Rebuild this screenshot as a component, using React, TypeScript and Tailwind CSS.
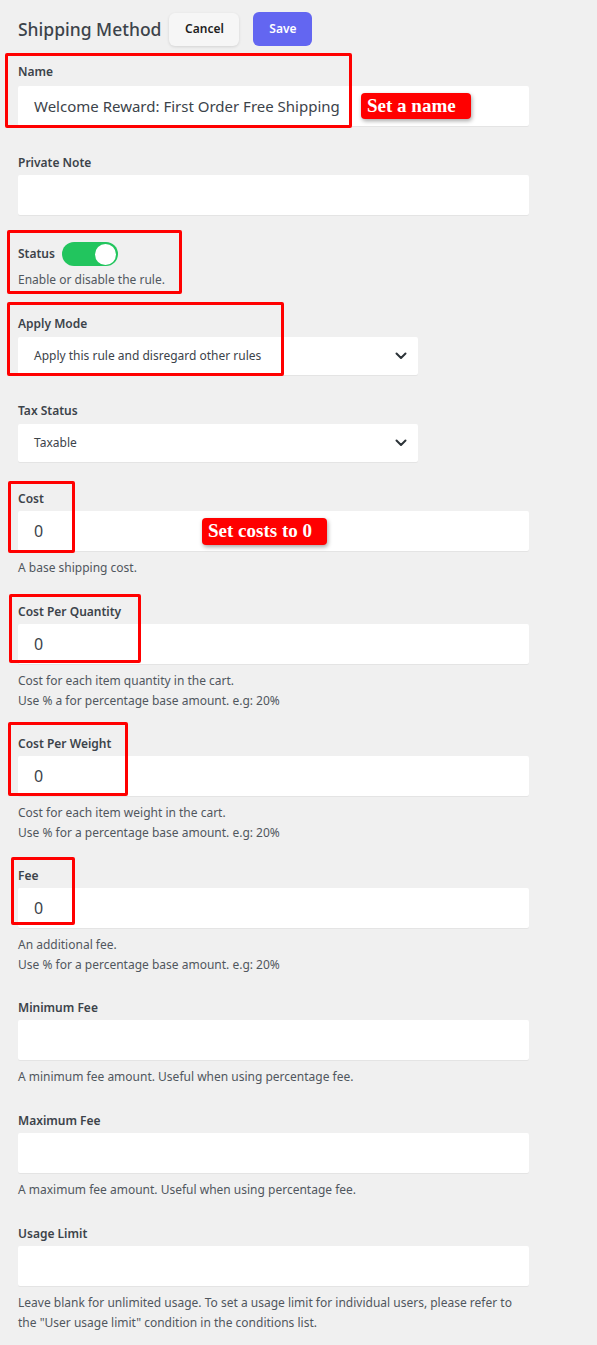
import React from "react";

const font = "font-['Segoe_UI','Noto_Sans','Liberation_Sans',sans-serif]";

type FieldProps = {
  label: string;
  value?: string;
  help?: string[];
  big?: boolean;
  loose?: boolean;
};

const inputCls =
  "h-10 w-[511px] bg-white rounded-[2px] shadow-[0_1px_0_#e4e4e4] flex items-center px-4 text-[#3c434a]";

const Field = ({ label, value, help, big, loose }: FieldProps) => (
  <div className="flex flex-col">
    <label className={`text-[12px] leading-4 font-semibold text-[#3c434a] ${loose ? "mb-[6px]" : "mb-[4px]"}`}>
      {label}
    </label>
    <div className={inputCls}>
      <span className={big ? "text-[16px]" : "text-[15px]"}>{value}</span>
    </div>
    {help && (
      <div className="mt-[7px] text-[12px] leading-5 text-[#50575e]">
        {help.map((h) => (
          <p key={h}>{h}</p>
        ))}
      </div>
    )}
  </div>
);

const Chevron = () => (
  <svg width="12" height="8" viewBox="0 0 12 8" fill="none" className="text-[#2c3338]">
    <path d="M1.5 1.5L6 6L10.5 1.5" stroke="currentColor" strokeWidth="2" strokeLinecap="round" strokeLinejoin="round" />
  </svg>
);

const Select = ({ label, value }: { label: string; value: string }) => (
  <div className="flex flex-col">
    <label className="text-[12px] leading-4 font-semibold text-[#3c434a] mb-[5px]">{label}</label>
    <div className="h-[38px] w-[400px] bg-white rounded-[2px] shadow-[0_1px_0_#e4e4e4] flex items-center justify-between pl-4 pr-[11px]">
      <span className="text-[12px] text-[#3c434a]">{value}</span>
      <Chevron />
    </div>
  </div>
);

// red annotation frame drawn over the form
const Frame = ({ className }: { className: string }) => (
  <div className={`absolute border-[3px] border-[#ff0000] rounded-[2px] pointer-events-none ${className}`} />
);

const Badge = ({ children, className }: { children: React.ReactNode; className: string }) => (
  <div
    className={`absolute bg-[#ff0000] text-white font-bold rounded-[4px] shadow-[1px_2px_4px_rgba(0,0,0,0.35)] flex items-center pl-[6px] pr-[15px] text-[19px] font-['Liberation_Serif',serif] ${className}`}
  >
    {children}
  </div>
);

export default function App() {
  return (
    <div className={`relative min-h-[1345px] w-[597px] bg-[#f0f0f0] ${font}`}>
      <div className="px-[18px] pt-[12px] pb-6">
        {/* Header */}
        <div className="flex items-center h-[34px]">
          <h1 className="text-[17.5px] font-medium text-[#3c434a] mr-[8px]">Shipping Method</h1>
          <button className="h-[33px] w-[70px] rounded-[6px] bg-[#f6f6f6] shadow-[0_1px_3px_rgba(0,0,0,0.12)] text-[12px] font-semibold text-[#1e1e1e] mr-[14px]">
            Cancel
          </button>
          <button className="h-[34px] w-[59px] rounded-[6px] bg-[#6366f1] text-[12px] font-semibold text-white">
            Save
          </button>
        </div>

        <div className="flex flex-col mt-[18px] gap-[28px]">
          <Field label="Name" value="Welcome Reward: First Order Free Shipping" loose />
          <div className="mt-[1px]">
            <Field label="Private Note" />
          </div>

          {/* Status */}
          <div className="flex flex-col -mt-[1px]">
            <div className="flex items-center gap-[7px] h-6">
              <span className="text-[12px] font-semibold text-[#3c434a]">Status</span>
              <div className="w-[56px] h-6 rounded-full bg-[#22c55e] flex items-center justify-end pr-[2px]">
                <div className="w-[21px] h-[21px] rounded-full bg-white" />
              </div>
            </div>
            <p className="mt-[4px] text-[12px] leading-5 text-[#50575e]">Enable or disable the rule.</p>
          </div>

          <div className="-mt-[2px]">
            <Select label="Apply Mode" value="Apply this rule and disregard other rules" />
          </div>
          <Select label="Tax Status" value="Taxable" />

          <div className="mt-[1px]">
            <Field label="Cost" value="0" big help={["A base shipping cost."]} />
          </div>
          <div className="-mt-[2px]">
            <Field
              label="Cost Per Quantity"
              value="0"
              big
              help={["Cost for each item quantity in the cart.", "Use % a for percentage base amount. e.g: 20%"]}
            />
          </div>
          <div className="-mt-[3px]">
            <Field
              label="Cost Per Weight"
              value="0"
              big
              help={["Cost for each item weight in the cart.", "Use % for a percentage base amount. e.g: 20%"]}
            />
          </div>
          <div className="-mt-[3px]">
            <Field
              label="Fee"
              value="0"
              big
              help={["An additional fee.", "Use % for a percentage base amount. e.g: 20%"]}
            />
          </div>
          <div className="-mt-[3px]">
            <Field label="Minimum Fee" help={["A minimum fee amount. Useful when using percentage fee."]} />
          </div>
          <div className="-mt-[2px]">
            <Field label="Maximum Fee" help={["A maximum fee amount. Useful when using percentage fee."]} />
          </div>
          <div className="-mt-[2px]">
            <Field
              label="Usage Limit"
              help={[
                'Leave blank for unlimited usage. To set a usage limit for individual users, please refer to',
                'the "User usage limit" condition in the conditions list.',
              ]}
            />
          </div>
        </div>
      </div>

      {/* annotations */}
      <Frame className="left-[5px] top-[53px] w-[347px] h-[75px]" />
      <Badge className="left-[361px] top-[93px] h-[26px]">Set a name</Badge>
      <Frame className="left-[7px] top-[230px] w-[175px] h-[64px]" />
      <Frame className="left-[7px] top-[302px] w-[277px] h-[74px]" />
      <Frame className="left-[8px] top-[481px] w-[67px] h-[72px]" />
      <Badge className="left-[202px] top-[518px] h-[27px]">Set costs to 0</Badge>
      <Frame className="left-[9px] top-[594px] w-[132px] h-[69px]" />
      <Frame className="left-[8px] top-[722px] w-[120px] h-[74px]" />
      <Frame className="left-[11px] top-[857px] w-[64px] h-[68px]" />
    </div>
  );
}
